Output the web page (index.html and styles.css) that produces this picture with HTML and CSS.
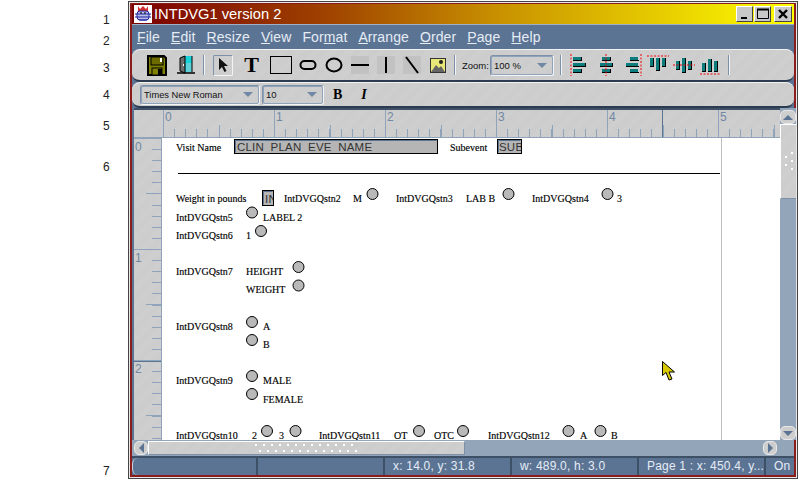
FILE: index.html

```html
<!DOCTYPE html>
<html lang="en">
<head>
<meta charset="UTF-8">
<title>INTDVG1 version 2</title>
<link rel="stylesheet" href="styles.css">
</head>
<body>

<div class="steps">
  <span>1</span><span>2</span><span>3</span><span>4</span><span>5</span><span>6</span><span>7</span>
</div>

<div class="window">
  <div class="frame">

    <div class="titlebar">
      <svg class="app-icon" width="18" height="18" viewBox="0 0 18 18">
        <rect width="18" height="18" fill="#fff"/>
        <path d="M4 1l2 3 3-3 3 3 2-3v5H4z" fill="#d03030"/>
        <rect x="3" y="6" width="12" height="9" rx="3" fill="#b8c0e8" stroke="#2020a0"/>
        <path d="M1 9h16M1 12h16M5 15h8" stroke="#2020a0"/>
        <path d="M6 8h2M10 8h2" stroke="#000"/>
      </svg>
      <span class="title">INTDVG1 version 2</span>
      <div class="win-btns">
        <button class="win-btn"><svg width="12" height="12"><rect x="2" y="9" width="6" height="2"/></svg></button>
        <button class="win-btn"><svg width="12" height="12"><path d="M0.500 1.500h11v9h-11z" fill="none" stroke="#000"/><path d="M0 1.500h12" stroke="#000" stroke-width="2"/></svg></button>
        <button class="win-btn win-close"><svg width="12" height="12"><path d="M2 2l8 8M10 2l-8 8" stroke="#000" stroke-width="2.400"/></svg></button>
      </div>
    </div>

    <div class="menubar">
      <span><u>F</u>ile</span>
      <span><u>E</u>dit</span>
      <span><u>R</u>esize</span>
      <span><u>V</u>iew</span>
      <span>For<u>m</u>at</span>
      <span><u>A</u>rrange</span>
      <span><u>O</u>rder</span>
      <span><u>P</u>age</span>
      <span><u>H</u>elp</span>
    </div>

    <div class="bar toolbar hatch">
      <div class="tool wide">
        <svg width="20" height="21" viewBox="0 0 20 21">
          <path d="M1 1h16l2 2v17H1z" fill="#808000" stroke="#000" stroke-width="2"/>
          <rect x="4" y="2" width="12" height="8" fill="#6b6b00" stroke="#000"/>
          <rect x="13" y="3" width="2" height="4" fill="#fff"/>
          <rect x="5" y="13" width="10" height="7" fill="#808000" stroke="#000"/>
          <rect x="11" y="14" width="4" height="6" fill="#000"/>
        </svg>
      </div>
      <div class="tool wide">
        <svg width="18" height="20" viewBox="0 0 18 20">
          <rect x="5" y="1" width="10" height="16" fill="#19d2d8"/>
          <path d="M9 8h6v9H9z" fill="#5ecfd6"/>
          <path d="M15 1v16" stroke="#000" stroke-width="1"/>
          <path d="M3 3l5-2v17l-5-2z" fill="#6d6d6d" stroke="#000"/>
          <path d="M0 18h18" stroke="#000" stroke-width="1.500"/>
          <rect x="6" y="9" width="1" height="2" fill="#fff"/>
        </svg>
      </div>
      <i class="sep"></i>
      <div class="tool wide">
        <div class="tool-on">
          <svg width="12" height="16" viewBox="0 0 12 16"><path d="M2 1v12l3-3 2.500 5 2-1-2.500-5h4z" fill="#111"/></svg>
        </div>
      </div>
      <div class="tool wide"><span class="t-glyph">T</span></div>
      <div class="tool wide">
        <svg width="22" height="18"><rect x="0.500" y="0.500" width="21" height="17" fill="none" stroke="#000"/></svg>
      </div>
      <div class="tool">
        <svg width="18" height="12"><rect x="1.500" y="2" width="15" height="8" rx="4" fill="none" stroke="#000" stroke-width="2"/></svg>
      </div>
      <div class="tool">
        <svg width="18" height="16"><ellipse cx="9" cy="8" rx="7.500" ry="6.500" fill="none" stroke="#000" stroke-width="2"/></svg>
      </div>
      <div class="tool">
        <svg class="dim" width="18" height="18"><path d="M0 9h18" stroke="#000" stroke-width="2"/></svg>
      </div>
      <div class="tool">
        <svg class="dim" width="18" height="18"><path d="M9 1v16" stroke="#000" stroke-width="2"/></svg>
      </div>
      <div class="tool">
        <svg class="dim" width="18" height="18"><path d="M3 1l12 16" stroke="#000" stroke-width="2"/></svg>
      </div>
      <div class="tool">
        <svg width="16" height="15" viewBox="0 0 16 15">
          <rect width="16" height="15" fill="#e8e878"/>
          <rect x="0.500" y="0.500" width="15" height="14" fill="none" stroke="#333"/>
          <circle cx="11" cy="4" r="2" fill="#222"/>
          <path d="M1 14l5-7 3 3 2-2 4 6z" fill="#666"/>
        </svg>
      </div>
      <i class="sep"></i>
      <span class="zoom-label">Zoom:</span>
      <div class="combo zoom-combo"><span>100 %</span><i class="caret"></i></div>
      <i class="sep sep-zoom"></i>
      <div class="tool">
        <svg width="22" height="22" viewBox="0 0 22 22">
          <path d="M2 0v22" stroke="#f00006" stroke-dasharray="2 1.500"/>
          <path d="M4 3h8v3H4zM4 9h12v3H4zM4 15h8v3H4z" fill="#0d7c7c"/>
          <path d="M4 6h8v1H4zM4 12h12v1H4zM4 18h8v1H4zM12 3h1v4h-1zM16 9h1v4h-1zM12 15h1v4h-1z" fill="#000"/>
        </svg>
      </div>
      <div class="tool">
        <svg width="22" height="22" viewBox="0 0 22 22">
          <path d="M7 3h8v3H7zM5 9h12v3H5zM7 15h8v3H7z" fill="#0d7c7c"/>
          <path d="M7 6h8v1H7zM5 12h12v1H5zM7 18h8v1H7zM15 3h1v4h-1zM17 9h1v4h-1zM15 15h1v4h-1z" fill="#000"/>
          <path d="M11 0v22" stroke="#f00006" stroke-dasharray="2 1.500"/>
        </svg>
      </div>
      <div class="tool">
        <svg width="22" height="22" viewBox="0 0 22 22">
          <path d="M20 0v22" stroke="#f00006" stroke-dasharray="2 1.500"/>
          <path d="M9 3h8v3H9zM5 9h12v3H5zM9 15h8v3H9z" fill="#0d7c7c"/>
          <path d="M9 6h9v1H9zM5 12h13v1H5zM9 18h9v1H9z" fill="#000"/>
        </svg>
      </div>
      <div class="tool">
        <svg width="22" height="22" viewBox="0 0 22 22">
          <path d="M0 2h22" stroke="#f00006" stroke-dasharray="2 1.500"/>
          <path d="M3 4h3v8H3zM9 4h3v12H9zM15 4h3v8h-3z" fill="#0d7c7c"/>
          <path d="M6 4h1v9H3v-1h3zM12 4h1v13H9v-1h3zM18 4h1v9h-4v-1h3z" fill="#000"/>
        </svg>
      </div>
      <div class="tool">
        <svg width="22" height="22" viewBox="0 0 22 22">
          <path d="M3 7h3v8H3zM9 4h3v14H9zM15 7h3v8h-3z" fill="#0d7c7c"/>
          <path d="M6 7h1v9H3v-1h3zM12 4h1v15H9v-1h3zM18 7h1v9h-4v-1h3z" fill="#000"/>
          <path d="M0 11h22" stroke="#f00006" stroke-dasharray="2 1.500"/>
        </svg>
      </div>
      <div class="tool">
        <svg width="22" height="22" viewBox="0 0 22 22">
          <path d="M3 9h3v8H3zM9 5h3v12H9zM15 7h3v10h-3z" fill="#0d7c7c"/>
          <path d="M6 9h1v9H3v-1h3zM12 5h1v13H9v-1h3zM18 7h1v11h-4v-1h3z" fill="#000"/>
          <path d="M1 20h20" stroke="#f00006" stroke-dasharray="2 1.500"/>
        </svg>
      </div>
      <i class="sep sep-last"></i>
    </div>

    <div class="bar fontbar hatch">
      <div class="combo font-combo"><span>Times New Roman</span><i class="caret"></i></div>
      <div class="combo size-combo"><span>10</span><i class="caret"></i></div>
      <span class="fmt fmt-b">B</span>
      <span class="fmt fmt-i">I</span>
    </div>

    <div class="canvas">
      <div class="corner hatch"></div>
      <div class="ruler-top hatch">
        <span>0</span><span>1</span><span>2</span><span>3</span><span>4</span><span>5</span>
      </div>
      <div class="vscroll">
        <div class="arrow-btn hatch"><i class="tri-up"></i></div>
        <div class="vthumb hatch"><i class="vgrip"></i></div>
        <div class="vtrack"></div>
        <div class="arrow-btn hatch"><i class="tri-down"></i></div>
      </div>
      <div class="ruler-left hatch">
        <span>0</span><span>1</span><span>2</span>
      </div>
      <div class="page">
        <svg class="form" width="618" height="302" viewBox="162 138 618 302">
          <defs>
            <clipPath id="clip-name"><rect x="236" y="140" width="200" height="11"/></clipPath>
            <clipPath id="clip-sub"><rect x="498" y="140" width="23" height="11"/></clipPath>
            <clipPath id="clip-in"><rect x="264" y="191" width="9" height="13"/></clipPath>
          </defs>

          <path class="margin" d="M721.500 138v302"/>
          <path class="rule" d="M178 173.500h542"/>

          <text x="176" y="151">Visit Name</text>
          <rect class="field" x="234.500" y="139.500" width="203" height="14"/>
          <path class="field-hi" d="M235.500 152.500v-12h201"/>
          <text class="field-text" x="237" y="151" clip-path="url(#clip-name)">CLIN_PLAN_EVE_NAME</text>
          <text x="450" y="151">Subevent</text>
          <rect class="field" x="497.500" y="139.500" width="24" height="14"/>
          <path class="field-hi" d="M498.500 152.500v-12h22"/>
          <text class="field-text" x="499" y="151" clip-path="url(#clip-sub)">SUBEVENT</text>

          <text x="176" y="202">Weight in pounds</text>
          <rect class="field" x="262.500" y="190.500" width="11" height="15"/>
          <path class="field-hi" d="M263.500 204.500v-13h9"/>
          <text class="field-text" x="265" y="203" clip-path="url(#clip-in)">IN</text>
          <text x="284" y="202">IntDVGQstn2</text>
          <text x="353" y="202">M</text>
          <circle cx="372.500" cy="194" r="5.500"/>
          <text x="396" y="202">IntDVGQstn3</text>
          <text x="466" y="202">LAB B</text>
          <circle cx="508.500" cy="194" r="5.500"/>
          <text x="532" y="202">IntDVGQstn4</text>
          <circle cx="607.500" cy="194" r="5.500"/>
          <text x="617" y="202">3</text>

          <text x="176" y="221">IntDVGQstn5</text>
          <circle cx="252" cy="212.500" r="5.500"/>
          <text x="263" y="221">LABEL 2</text>

          <text x="176" y="239">IntDVGQstn6</text>
          <text x="246" y="239">1</text>
          <circle cx="261" cy="231" r="5.500"/>

          <text x="176" y="275">IntDVGQstn7</text>
          <text x="246" y="275">HEIGHT</text>
          <circle cx="298.500" cy="267" r="5.500"/>
          <text x="246" y="293">WEIGHT</text>
          <circle cx="298.500" cy="285.500" r="5.500"/>

          <text x="176" y="330">IntDVGQstn8</text>
          <circle cx="252" cy="322" r="5.500"/>
          <text x="263" y="330">A</text>
          <circle cx="252" cy="340" r="5.500"/>
          <text x="263" y="348">B</text>

          <text x="176" y="384">IntDVGQstn9</text>
          <circle cx="252" cy="376" r="5.500"/>
          <text x="263" y="384">MALE</text>
          <circle cx="252" cy="394" r="5.500"/>
          <text x="263" y="403">FEMALE</text>

          <text x="176" y="439">IntDVGQstn10</text>
          <text x="252" y="439">2</text>
          <circle cx="267" cy="431" r="5.500"/>
          <text x="279" y="439">3</text>
          <circle cx="295.500" cy="431" r="5.500"/>
          <text x="319" y="439">IntDVGQstn11</text>
          <text x="394" y="439">OT</text>
          <circle cx="419" cy="431" r="5.500"/>
          <text x="434" y="439">OTC</text>
          <circle cx="463" cy="431" r="5.500"/>
          <text x="488" y="439">IntDVGQstn12</text>
          <circle cx="568.500" cy="431" r="5.500"/>
          <text x="580" y="439">A</text>
          <circle cx="600.500" cy="431" r="5.500"/>
          <text x="611" y="439">B</text>
        </svg>
      </div>
    </div>

    <div class="hscroll">
      <div class="arrow-btn hatch h-btn"><i class="tri-left"></i></div>
      <div class="hthumb hatch"><i class="hgrip"></i></div>
      <div class="htrack"></div>
      <div class="arrow-btn hatch h-btn"><i class="tri-right"></i></div>
    </div>

    <div class="statusbar">
      <span class="cell cell-first"></span>
      <span class="cell"></span>
      <span class="cell">x: 14.0, y: 31.8</span>
      <span class="cell">w: 489.0, h: 3.0</span>
      <span class="cell">Page 1 : x: 450.4, y...</span>
      <span class="cell cell-last">On</span>
    </div>

  </div>
</div>

<svg class="pointer" width="13" height="20" viewBox="0 0 13 20">
  <path d="M0.500 0.500v14l3.500-3 3 7.500 3-1-3-7h5.500z" fill="#d8c800" stroke="#000"/>
</svg>

</body>
</html>
```

FILE: styles.css

```css
html, body {
  margin: 0;
  height: 479px;
  overflow: hidden;
  background: #fff;
}
body {
  display: flex;
  font-family: "Liberation Sans", Arial, sans-serif;
  position: relative;
}
i { display: block; }

.hatch {
  background-color: #cdcdcd;
  background-image: repeating-linear-gradient(135deg, #d0d0d0 0 1px, #cbcbcb 1px 2px);
}

/* numbers beside the window */
.steps {
  width: 128px;
  flex: none;
  box-sizing: border-box;
  padding: 12px 0 0 103px;
  display: grid;
  grid-template-rows: 21px 27px 27px 31px 41px 304px 16px;
  font-size: 12px;
  line-height: 16px;
  color: #222;
}

.window {
  width: 670px;
  height: 478px;
  margin-top: 1px;
  box-sizing: border-box;
  border: 1px solid #444;
  padding: 1px;
  background: #e8e8e8;
}
.frame {
  height: 474px;
  box-sizing: border-box;
  border: solid #8a1c1c;
  border-width: 1px 2px 2px 2px;
  background: #5b7494;
  display: flex;
  flex-direction: column;
}

.titlebar {
  height: 20px;
  flex: none;
  display: flex;
  align-items: center;
  background: linear-gradient(90deg, #7a0000 0%, #a04400 30%, #c89000 55%, #e4c800 78%, #ffff00 100%);
  color: #fff;
}
.app-icon { margin: 0 2px 0 2px; }
.title { font-size: 14.700px; }
.win-btns {
  margin-left: auto;
  display: flex;
  margin-right: 2px;
}
.win-btn {
  width: 17px;
  height: 16px;
  padding: 0;
  margin-left: 1px;
  display: flex;
  align-items: center;
  justify-content: center;
  background: #c8c8c8;
  border: 1px solid;
  border-color: #fff #444 #444 #fff;
}
.win-close { margin-left: 3px; width: 18px; }

.menubar {
  height: 25px;
  flex: none;
  display: flex;
  align-items: center;
  padding-left: 5px;
  gap: 11px;
  font-size: 14px;
  letter-spacing: 0.1px;
  color: #e6ecf4;
  box-sizing: border-box;
  border-top: 1px solid #9fb0c4;
}

.bar {
  flex: none;
  display: flex;
  align-items: center;
  box-sizing: border-box;
  border-top: 1px solid #f2f2f2;
  border-bottom: 2px solid #2c3b4f;
  border-radius: 8px;
}
.toolbar { height: 33px; padding-left: 10px; }
.fontbar { height: 26px; padding-left: 8px; }

.tool {
  width: 26px;
  height: 24px;
  flex: none;
  display: flex;
  align-items: center;
  justify-content: center;
}
.tool.wide { width: 29px; }
.tool-on {
  width: 18px;
  height: 19px;
  display: flex;
  align-items: center;
  justify-content: center;
  border: 1px solid;
  border-color: #7c90a8 #f4f4f4 #f4f4f4 #7c90a8;
  border-radius: 2px;
}
.dim { background: #c2c2c2; }
.t-glyph {
  font: bold 22px "Liberation Serif", serif;
  color: #000;
  line-height: 24px;
}

.sep {
  width: 2px;
  height: 20px;
  margin: 0 3px;
  flex: none;
  background: #f4f4f4;
  border-left: 1px solid #7c90a8;
  box-sizing: border-box;
}
.sep-zoom { margin: 0 5px 0 6px; }
.sep-last { margin-left: 5px; }

.zoom-label {
  font-size: 9.500px;
  color: #111;
  margin: 0 3px 0 3px;
  width: 25px;
}
.combo {
  display: flex;
  align-items: center;
  justify-content: space-between;
  box-sizing: border-box;
  flex: none;
  padding: 0 6px 0 3px;
  border: 1px solid;
  border-color: #7c90a8 #f4f4f4 #f4f4f4 #7c90a8;
  outline: 1px solid #8fa3bb;
  outline-offset: -2px;
  border-radius: 3px;
  font-size: 9.500px;
  color: #111;
}
.zoom-combo { width: 64px; height: 21px; margin-right: 0; }
.font-combo { width: 120px; height: 20px; }
.size-combo { width: 62px; height: 20px; margin-left: 2px; }
.font-combo span { font-size: 9.300px; }
.caret {
  width: 0;
  height: 0;
  border: solid transparent;
  border-width: 5px 5px 0 5px;
  border-top-color: #7088a4;
}
.fmt {
  font-family: "Liberation Serif", serif;
  font-weight: bold;
  font-size: 14px;
  color: #000;
}
.fmt-b { margin-left: 9px; }
.fmt-i { margin-left: 19px; font-style: italic; }

.canvas {
  height: 332px;
  flex: none;
  box-sizing: border-box;
  padding-left: 2px;
  display: grid;
  grid-template-columns: 28px 618px 16px;
  grid-template-rows: 30px 302px;
  position: relative;
}

.corner { border-top: 2px solid #3d5066; border-bottom: 1px solid #8fa3bb; }
.ruler-top {
  border-top: 2px solid #3d5066;
  border-bottom: 1px solid #8fa3bb;
  box-sizing: border-box;
  display: flex;
  position: relative;
  background-image:
    linear-gradient(#5b7494, #5b7494),
    repeating-linear-gradient(90deg, #8fa3bb 0 1px, transparent 1px 111px),
    repeating-linear-gradient(90deg, transparent 0 56px, #8fa3bb 56px 57px, transparent 57px 111px),
    repeating-linear-gradient(90deg, #8fa3bb 0 1px, transparent 1px 11.100px),
    repeating-linear-gradient(135deg, #d0d0d0 0 1px, #cbcbcb 1px 2px);
  background-size: 1px 100%, 100% 100%, 100% 12px, 100% 8px, auto;
  background-position: 500px 0, 1px 0, 1px 100%, 1px 100%, 0 0;
  background-repeat: no-repeat;
}
.ruler-top span {
  width: 111px;
  flex: none;
  box-sizing: border-box;
  padding-left: 3px;
  font-size: 12px;
  line-height: 14px;
  color: #7088a4;
}

.ruler-left {
  border-right: 1px solid #8fa3bb;
  box-sizing: border-box;
  display: flex;
  flex-direction: column;
  overflow: hidden;
  background-image:
    linear-gradient(#5b7494, #5b7494),
    repeating-linear-gradient(180deg, #8fa3bb 0 1px, transparent 1px 111px),
    repeating-linear-gradient(180deg, transparent 0 55px, #8fa3bb 55px 56px, transparent 56px 111px),
    repeating-linear-gradient(180deg, #8fa3bb 0 1px, transparent 1px 11.100px),
    repeating-linear-gradient(135deg, #d0d0d0 0 1px, #cbcbcb 1px 2px);
  background-size: 100% 1px, 100% 100%, 15px 100%, 9px 100%, auto;
  background-position: 0 223px, 0 0, 100% 0, 100% 0, 0 0;
  background-repeat: no-repeat;
}
.ruler-left span {
  height: 111px;
  flex: none;
  box-sizing: border-box;
  padding: 2px 0 0 1px;
  font-size: 12px;
  line-height: 14px;
  color: #7088a4;
}

.page {
  background: #fff;
  overflow: hidden;
}
.form { display: block; }
.form text {
  font-family: "Liberation Serif", serif;
  font-size: 10px;
  fill: #000;
  stroke: #000;
  stroke-width: 0.150px;
}
.form circle { fill: #b9b9b9; stroke: #000; stroke-width: 1; }
.form .rule { stroke: #000; fill: none; }
.form .margin { stroke: #bdbdbd; fill: none; }
.form .field { fill: #b5b5b5; stroke: #000; }
.form .field-hi { fill: none; stroke: #5b7494; }
.form .field-text {
  font-family: "Liberation Sans", sans-serif;
  font-size: 11.500px;
  letter-spacing: 0.2px;
  fill: #333;
  stroke: none;
}

.vscroll {
  grid-column: 3;
  grid-row: 1 / 3;
  background: #93a5b8;
  display: flex;
  flex-direction: column;
  box-sizing: border-box;
  padding-top: 2px;
  border-top: 0;
}
.arrow-btn {
  height: 14px;
  flex: none;
  display: flex;
  align-items: center;
  justify-content: center;
  border-radius: 5px;
  box-sizing: border-box;
  border: 1px solid #e8e8e8;
}
.vthumb {
  height: 75px;
  flex: none;
  box-sizing: border-box;
  border-top: 1px solid #fff;
  border-left: 1px solid #fff;
  border-bottom: 1px solid #7c90a8;
  display: flex;
  align-items: center;
  justify-content: center;
}
.vtrack { flex: 1; }
.tri-up, .tri-down, .tri-left, .tri-right {
  width: 0;
  height: 0;
  border: solid transparent;
}
.tri-up { border-width: 0 5px 5px 5px; border-bottom-color: #5b7494; }
.tri-down { border-width: 5px 5px 0 5px; border-top-color: #5b7494; }
.tri-left { border-width: 5px 5px 5px 0; border-right-color: #5b7494; }
.tri-right { border-width: 5px 0 5px 5px; border-left-color: #5b7494; }

.vgrip {
  width: 8px;
  height: 20px;
  background-image:
    linear-gradient(#fff 2px, transparent 2px),
    linear-gradient(#fff 2px, transparent 2px);
  background-size: 2px 8px, 2px 8px;
  background-repeat: repeat-y;
  background-position: 0 4px, 6px 0;
}

.hscroll {
  height: 16px;
  flex: none;
  box-sizing: border-box;
  padding: 1px 17px 1px 2px;
  background: #93a5b8;
  display: flex;
}
.h-btn { width: 14px; height: 14px; }
.hthumb {
  width: 317px;
  flex: none;
  box-sizing: border-box;
  border: 1px solid;
  border-color: #fff #7c90a8 #7c90a8 #fff;
  display: flex;
  align-items: center;
  justify-content: center;
}
.htrack { flex: 1; }
.hgrip {
  width: 104px;
  height: 8px;
  background-image:
    linear-gradient(90deg, #fff 2px, transparent 2px),
    linear-gradient(90deg, #fff 2px, transparent 2px);
  background-size: 8px 2px, 8px 2px;
  background-repeat: repeat-x;
  background-position: 0 0, 4px 6px;
}

.statusbar {
  flex: 1;
  display: flex;
  align-items: center;
  box-sizing: border-box;
  border-top: 2px solid #3d5066;
  font-size: 12px;
  letter-spacing: 0.2px;
  color: #e6ecf4;
  overflow: hidden;
}
.cell {
  width: 127px;
  height: 100%;
  flex: none;
  box-sizing: border-box;
  padding-left: 8px;
  line-height: 16px;
  white-space: nowrap;
  border-right: 2px solid #3d5066;
}
.cell-first { width: 126px; border-left: 1px solid #c8d0da; border-radius: 6px 0 0 6px; }
.cell-last { width: 30px; border-right: 0; }

/* mouse pointer sitting on the page */
.pointer {
  position: absolute;
  left: 662px;
  top: 361px;
}
```
